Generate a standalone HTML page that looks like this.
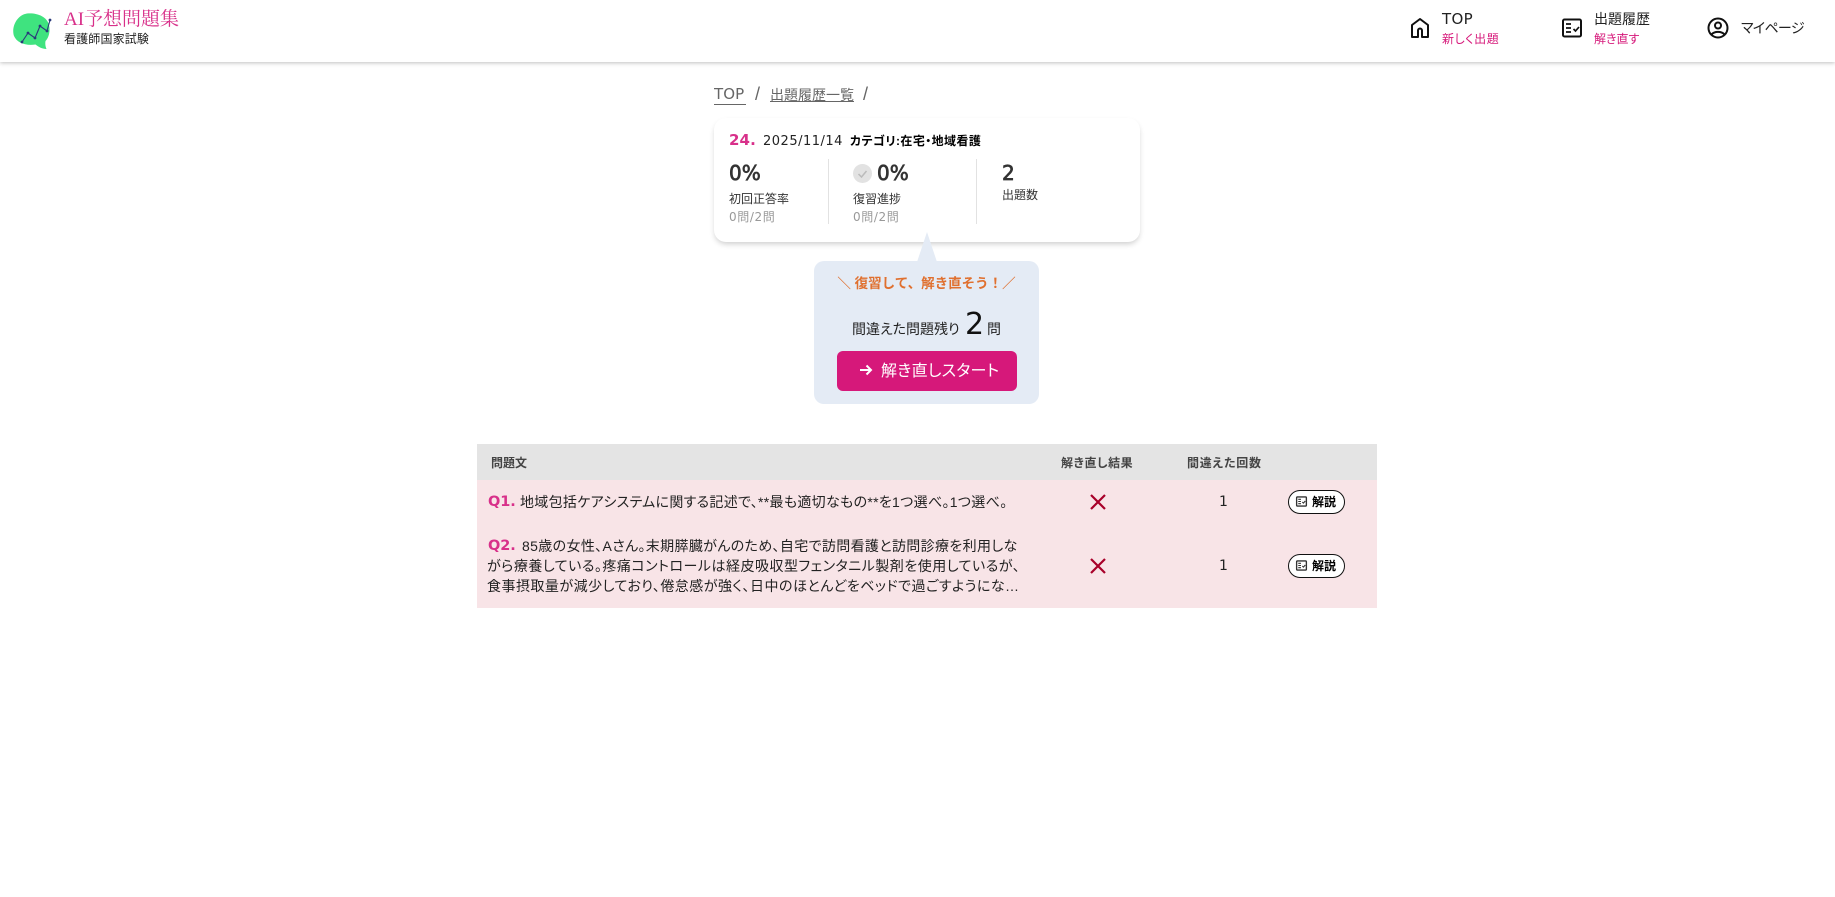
<!DOCTYPE html>
<html lang="ja"><head><meta charset="utf-8"><title>AI予想問題集</title>
<style>
html,body{margin:0;padding:0;background:#fff;width:1835px;height:897px;overflow:hidden}
body{font-family:"Liberation Sans","Noto Sans CJK JP",sans-serif;color:#222;position:relative;font-feature-settings:"palt"}
.a{position:absolute;white-space:nowrap;line-height:1}
.d{font-family:"DejaVu Sans","Noto Sans CJK JP",sans-serif}
svg{position:absolute;display:block}
.p{color:#d6187a}
</style></head><body>
<div class="a" style="left:0;top:0;width:1835px;height:62px;background:#fff;box-shadow:0 1px 4px rgba(0,0,0,.25)"></div>
<svg style="left:12px;top:12px" width="40" height="38" viewBox="0 0 40 38"><path d="M15 1.500C24 .5 35 4 37 13c1.500 7-.5 13-3.500 16-.5 3 0 6 1 8-4 0-8-2-11-4.500C14 34 5 31 2 24-1 15 5 3 15 1.500z" fill="#3fe37f"/><path d="M10 30l6-9 7 5 5-12 7 5 3-11" fill="none" stroke="#2a3a7a" stroke-width="1.100"/><g fill="#2a3a7a"><circle cx="10" cy="30" r="1.400"/><circle cx="16" cy="21" r="1.400"/><circle cx="23" cy="26" r="1.400"/><circle cx="28" cy="14" r="1.400"/><circle cx="35" cy="19" r="1.400"/><circle cx="38" cy="8" r="1.400"/></g></svg>
<div class="a" style="left:64px;top:10px;font-family:'Liberation Serif','Noto Serif CJK SC',serif;font-size:19px;line-height:1;color:#d8308a">AI予想問題集</div>
<div class="a" style="left:64px;top:33px;font-size:12px;letter-spacing:.15px">看護師国家試験</div>

<svg style="left:1408px;top:16px" width="24" height="24" viewBox="0 0 24 24"><path d="M12 3 4 9v12h6v-6.500a2 2 0 0 1 4 0V21h6V9z" fill="none" stroke="#111" stroke-width="2" stroke-linejoin="round"/></svg>
<div class="a d" style="left:1442px;top:12px;font-size:15px;letter-spacing:.3px">TOP</div>
<div class="a p" style="left:1442px;top:33px;font-size:12px;letter-spacing:.6px">新しく出題</div>
<svg style="left:1560px;top:16px" width="24" height="24" viewBox="0 0 24 24"><rect x="3" y="3.500" width="18" height="17" rx="1.500" fill="none" stroke="#111" stroke-width="2"/><path d="M6 8h5M6 12h5M6 16h5M13.500 13l2 2 3.500-4" fill="none" stroke="#111" stroke-width="1.700"/></svg>
<div class="a" style="left:1594px;top:12px;font-size:14px">出題履歴</div>
<div class="a p" style="left:1594px;top:33px;font-size:12px">解き直す</div>
<svg style="left:1706px;top:16px" width="24" height="24" viewBox="0 0 24 24"><circle cx="12" cy="12" r="9.500" fill="none" stroke="#111" stroke-width="2"/><circle cx="12" cy="9.500" r="3" fill="none" stroke="#111" stroke-width="2"/><path d="M5.500 18.500c3-3.500 10-3.500 13 0" fill="none" stroke="#111" stroke-width="2"/></svg>
<div class="a" style="left:1741px;top:21px;font-size:14px;letter-spacing:-.7px">マイページ</div>

<div class="a d" style="left:714px;top:87px;font-size:15px;letter-spacing:.1px;color:#666;padding-bottom:2px;border-bottom:1px solid #666;width:32px;overflow:hidden">TOP</div>
<div class="a" style="left:755px;top:85px;font-size:18px;color:#666">/</div>
<div class="a" style="left:770px;top:88px;font-size:14px;color:#666;text-decoration:underline">出題履歴一覧</div>
<div class="a" style="left:863px;top:85px;font-size:18px;color:#666">/</div>

<div class="a" style="left:714px;top:118px;width:426px;height:124px;background:#fff;border-radius:12px;box-shadow:0 3px 6px -1px rgba(0,0,0,.2)"></div>
<div class="a d p" style="left:729px;top:133px;font-size:15px;font-weight:bold;letter-spacing:.1px;color:#d8308a">24.</div>
<div class="a d" style="left:763px;top:135px;font-size:13px;letter-spacing:.5px">2025/11/14</div>
<div class="a" style="left:850px;top:135px;font-size:12px;font-weight:bold;color:#000;letter-spacing:.4px">カテゴリ:在宅・地域看護</div>
<div class="a d" style="left:729px;top:163px;font-size:20px;color:#333;-webkit-text-stroke:.7px #333">0%</div>
<div class="a" style="left:729px;top:193px;font-size:12px;color:#333">初回正答率</div>
<div class="a d" style="left:729px;top:211px;font-size:12px;color:#999;letter-spacing:.6px">0問/2問</div>
<div class="a" style="left:828px;top:159px;width:1px;height:65px;background:#e2e2e2"></div>
<svg style="left:853px;top:164px" width="19" height="19" viewBox="0 0 19 19"><circle cx="9.500" cy="9.500" r="9.500" fill="#e2e2e2"/><path d="M5.500 10l3 3 5-6" fill="none" stroke="#bbb" stroke-width="1.500"/></svg>
<div class="a d" style="left:877px;top:163px;font-size:20px;color:#333;-webkit-text-stroke:.7px #333">0%</div>
<div class="a" style="left:853px;top:193px;font-size:12px;color:#333">復習進捗</div>
<div class="a d" style="left:853px;top:211px;font-size:12px;color:#999;letter-spacing:.6px">0問/2問</div>
<div class="a" style="left:976px;top:159px;width:1px;height:65px;background:#e2e2e2"></div>
<div class="a d" style="left:1002px;top:163px;font-size:20px;color:#333;-webkit-text-stroke:.7px #333">2</div>
<div class="a" style="left:1002px;top:189px;font-size:12px;color:#333">出題数</div>

<div class="a" style="left:814px;top:261px;width:225px;height:143px;background:#e4ebf5;border-radius:10px"></div>
<svg style="left:916px;top:232px" width="22" height="30" viewBox="0 0 22 30"><path d="M11 0 21 30H1z" fill="#e4ebf5"/></svg>
<div class="a" style="left:814px;width:225px;text-align:center;top:277px;font-size:13.500px;font-weight:bold;color:#e0702f;font-feature-settings:normal">＼ 復習して、解き直そう！／</div>
<div class="a" style="left:852px;top:322px;font-size:14px;color:#222">間違えた問題残り</div>
<div class="a d" style="left:965px;top:310px;font-size:30px;color:#111">2</div>
<div class="a" style="left:987px;top:322px;font-size:14px;color:#222">問</div>
<div class="a" style="left:837px;top:351px;width:180px;height:40px;background:#d6187a;border-radius:6px"></div>
<svg style="left:858px;top:362px" width="16" height="16" viewBox="0 0 16 16"><path d="M2 8h11M8.500 3.500 13 8l-4.500 4.500" fill="none" stroke="#fff" stroke-width="2"/></svg>
<div class="a" style="left:881px;top:364px;font-size:16px;color:#fff;letter-spacing:.3px">解き直しスタート</div>

<div class="a" style="left:477px;top:444px;width:900px;height:36px;background:#e4e4e4"></div>
<div class="a" style="left:477px;top:480px;width:900px;height:128px;background:#f8e4e7"></div>
<div class="a" style="left:491px;top:457px;font-size:12px;font-weight:bold;color:#444">問題文</div>
<div class="a" style="left:1061px;top:457px;font-size:12px;font-weight:bold;color:#444;letter-spacing:.55px">解き直し結果</div>
<div class="a" style="left:1187px;top:457px;font-size:12px;font-weight:bold;color:#444;letter-spacing:.75px">間違えた回数</div>

<div class="a d p" style="left:488px;top:495px;font-size:14.500px;font-weight:bold;letter-spacing:-.1px;color:#d8308a">Q1.</div>
<div class="a" style="left:520px;top:495px;font-size:14px;color:#222;letter-spacing:.3px">地域包括ケアシステムに関する記述で、**最も適切なもの**を1つ選べ。1つ選べ。</div>
<div class="a d p" style="left:488px;top:539px;font-size:14.500px;font-weight:bold;letter-spacing:-.1px;color:#d8308a">Q2.</div>
<div class="a" style="left:522px;top:539px;font-size:14px;color:#222;letter-spacing:.35px">85歳の女性、Aさん。末期膵臓がんのため、自宅で訪問看護と訪問診療を利用しな</div>
<div class="a" style="left:487px;top:559px;font-size:14px;color:#222;letter-spacing:.5px">がら療養している。疼痛コントロールは経皮吸収型フェンタニル製剤を使用しているが、</div>
<div class="a" style="left:487px;top:579px;font-size:14px;color:#222;letter-spacing:.48px">食事摂取量が減少しており、倦怠感が強く、日中のほとんどをベッドで過ごすようにな…</div>

<svg style="left:1088px;top:492px" width="20" height="20" viewBox="0 0 20 20"><path d="M3 3l14 14M17 3 3 17" stroke="#a8002a" stroke-width="2.200" fill="none"/></svg>
<svg style="left:1088px;top:556px" width="20" height="20" viewBox="0 0 20 20"><path d="M3 3l14 14M17 3 3 17" stroke="#a8002a" stroke-width="2.200" fill="none"/></svg>
<div class="a d" style="left:1219px;top:495px;font-size:14px;color:#222">1</div>
<div class="a d" style="left:1219px;top:559px;font-size:14px;color:#222">1</div>

<div class="a" style="left:1288px;top:490px;width:55px;height:22px;border:1.500px solid #111;border-radius:12px;background:#fff"></div>
<svg style="left:1295px;top:495px" width="13" height="13" viewBox="0 0 24 24"><rect x="3" y="3.500" width="18" height="17" rx="1.500" fill="none" stroke="#333" stroke-width="2.500"/><path d="M6 8h5M6 12h5M6 16h5M13.500 13l2 2 3.500-4" fill="none" stroke="#333" stroke-width="2"/></svg>
<div class="a" style="left:1312px;top:496px;font-size:12px;font-weight:bold;color:#000">解説</div>
<div class="a" style="left:1288px;top:554px;width:55px;height:22px;border:1.500px solid #111;border-radius:12px;background:#fff"></div>
<svg style="left:1295px;top:559px" width="13" height="13" viewBox="0 0 24 24"><rect x="3" y="3.500" width="18" height="17" rx="1.500" fill="none" stroke="#333" stroke-width="2.500"/><path d="M6 8h5M6 12h5M6 16h5M13.500 13l2 2 3.500-4" fill="none" stroke="#333" stroke-width="2"/></svg>
<div class="a" style="left:1312px;top:560px;font-size:12px;font-weight:bold;color:#000">解説</div>
</body></html>
